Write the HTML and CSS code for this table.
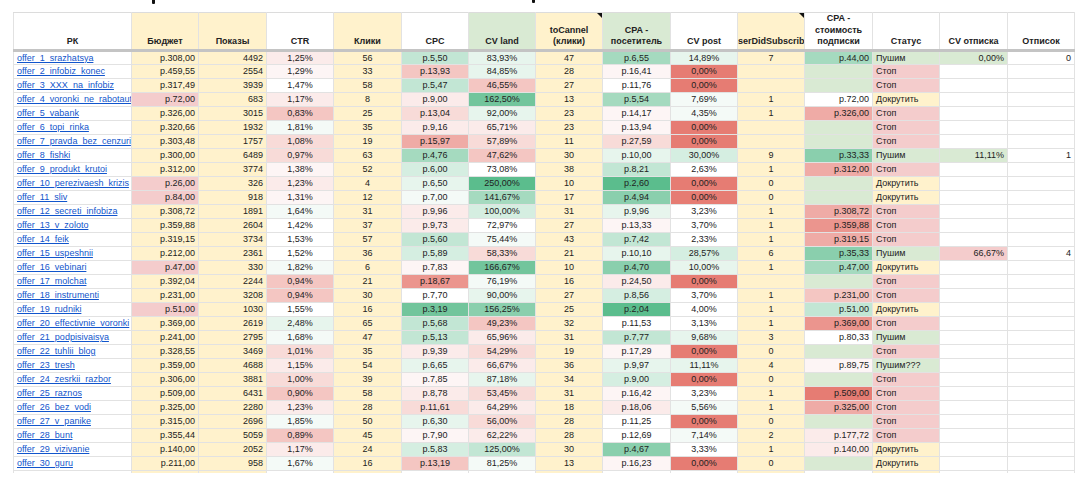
FILE: index.html
```html
<!DOCTYPE html>
<html lang="ru">
<head>
<meta charset="utf-8">
<title>РК</title>
<link rel="stylesheet" href="styles.css">
</head>
<body>
<div class="top"><span class="mark m1"></span><span class="mark m2"></span></div>
<table class="sheet">
<colgroup>
<col class="w-rk"><col class="w67"><col class="w68"><col class="w67"><col class="w68"><col class="w67"><col class="w67"><col class="w67"><col class="w68"><col class="w67"><col class="w67"><col class="w68"><col class="w67"><col class="w68"><col class="w67">
</colgroup>
<thead>
<tr class="head">
<th>РК</th>
<th class="yh">Бюджет</th>
<th class="yh">Показы</th>
<th>CTR</th>
<th class="yh">Клики</th>
<th>CPC</th>
<th class="gh">CV land</th>
<th class="yh note">toCannel<br>(клики)</th>
<th class="gh">CPA -<br>посетитель</th>
<th>CV post</th>
<th class="yh note"><div class="hc"><span>userDidSubscribe</span></div></th>
<th>CPA -<br>стоимость<br>подписки</th>
<th>Статус</th>
<th>CV отписка</th>
<th>Отписок</th>
</tr>
</thead>
<tbody>
<tr><td class="rk"><a href="#">offer_1_srazhatsya</a></td><td class="y ra">р.308,00</td><td class="y ra">4492</td><td class="ca r0">1,25%</td><td class="y ca">56</td><td class="ca g2">р.5,50</td><td class="ca g0">83,93%</td><td class="y ca">47</td><td class="ca g3">р.6,55</td><td class="ca g0">14,89%</td><td class="y ca">7</td><td class="ra g3">р.44,00</td><td class="st push">Пушим</td><td class="ra push">0,00%</td><td class="ra">0</td></tr>
<tr><td class="rk"><a href="#">offer_2_infobiz_konec</a></td><td class="y ra">р.459,55</td><td class="y ra">2554</td><td class="ca rr">1,29%</td><td class="y ca">33</td><td class="ca r2">р.13,93</td><td class="ca g0">84,85%</td><td class="y ca">28</td><td class="ca rr">р.16,41</td><td class="ca r5">0,00%</td><td class="y ca"></td><td class="ra push"></td><td class="st stop">Стоп</td><td></td><td></td></tr>
<tr><td class="rk"><a href="#">offer_3_XXX_na_infobiz</a></td><td class="y ra">р.317,49</td><td class="y ra">3939</td><td class="ca">1,47%</td><td class="y ca">58</td><td class="ca g2">р.5,47</td><td class="ca r2">46,55%</td><td class="y ca">27</td><td class="ca">р.11,76</td><td class="ca r5">0,00%</td><td class="y ca"></td><td class="ra push"></td><td class="st stop">Стоп</td><td></td><td></td></tr>
<tr><td class="rk"><a href="#">offer_4_voronki_ne_rabotaut</a></td><td class="y pk ra">р.72,00</td><td class="y ra">683</td><td class="ca r0">1,17%</td><td class="y ca">8</td><td class="ca r0">р.9,00</td><td class="ca g5">162,50%</td><td class="y ca">13</td><td class="ca g3">р.5,54</td><td class="ca gg">7,69%</td><td class="y ca">1</td><td class="ra">р.72,00</td><td class="st dokr">Докрутить</td><td></td><td></td></tr>
<tr><td class="rk"><a href="#">offer_5_vabank</a></td><td class="y ra">р.326,00</td><td class="y ra">3015</td><td class="ca r2">0,83%</td><td class="y ca">25</td><td class="ca r1">р.13,04</td><td class="ca g0">92,00%</td><td class="y ca">23</td><td class="ca rr">р.14,17</td><td class="ca gg">4,35%</td><td class="y ca">1</td><td class="ra r3">р.326,00</td><td class="st stop">Стоп</td><td></td><td></td></tr>
<tr><td class="rk"><a href="#">offer_6_topi_rinka</a></td><td class="y ra">р.320,66</td><td class="y ra">1932</td><td class="ca gg">1,81%</td><td class="y ca">35</td><td class="ca r0">р.9,16</td><td class="ca r0">65,71%</td><td class="y ca">23</td><td class="ca rr">р.13,94</td><td class="ca r5">0,00%</td><td class="y ca"></td><td class="ra push"></td><td class="st stop">Стоп</td><td></td><td></td></tr>
<tr><td class="rk"><a href="#">offer_7_pravda_bez_cenzuri</a></td><td class="y ra">р.303,48</td><td class="y ra">1757</td><td class="ca r1">1,08%</td><td class="y ca">19</td><td class="ca r3">р.15,97</td><td class="ca r1">57,89%</td><td class="y ca">11</td><td class="ca r1">р.27,59</td><td class="ca r5">0,00%</td><td class="y ca"></td><td class="ra push"></td><td class="st stop">Стоп</td><td></td><td></td></tr>
<tr><td class="rk"><a href="#">offer_8_fishki</a></td><td class="y ra">р.300,00</td><td class="y ra">6489</td><td class="ca r1">0,97%</td><td class="y ca">63</td><td class="ca g3">р.4,76</td><td class="ca r2">47,62%</td><td class="y ca">30</td><td class="ca g0">р.10,00</td><td class="ca g1">30,00%</td><td class="y ca">9</td><td class="ra g4">р.33,33</td><td class="st push">Пушим</td><td class="ra push">11,11%</td><td class="ra">1</td></tr>
<tr><td class="rk"><a href="#">offer_9_produkt_krutoi</a></td><td class="y ra">р.312,00</td><td class="y ra">3774</td><td class="ca rr">1,38%</td><td class="y ca">52</td><td class="ca g1">р.6,00</td><td class="ca">73,08%</td><td class="y ca">38</td><td class="ca g2">р.8,21</td><td class="ca">2,63%</td><td class="y ca">1</td><td class="ra r3">р.312,00</td><td class="st stop">Стоп</td><td></td><td></td></tr>
<tr><td class="rk"><a href="#">offer_10_perezivaesh_krizis</a></td><td class="y pk ra">р.26,00</td><td class="y ra">326</td><td class="ca r0">1,23%</td><td class="y ca">4</td><td class="ca g0">р.6,50</td><td class="ca g6">250,00%</td><td class="y ca">10</td><td class="ca g6">р.2,60</td><td class="ca r5">0,00%</td><td class="y ca">0</td><td class="ra push"></td><td class="st dokr">Докрутить</td><td></td><td></td></tr>
<tr><td class="rk"><a href="#">offer_11_sliv</a></td><td class="y pk ra">р.84,00</td><td class="y ra">918</td><td class="ca rr">1,31%</td><td class="y ca">12</td><td class="ca gg">р.7,00</td><td class="ca g3">141,67%</td><td class="y ca">17</td><td class="ca g4">р.4,94</td><td class="ca r5">0,00%</td><td class="y ca">0</td><td class="ra push"></td><td class="st dokr">Докрутить</td><td></td><td></td></tr>
<tr><td class="rk"><a href="#">offer_12_secreti_infobiza</a></td><td class="y ra">р.308,72</td><td class="y ra">1891</td><td class="ca gg">1,64%</td><td class="y ca">31</td><td class="ca r0">р.9,96</td><td class="ca g1">100,00%</td><td class="y ca">31</td><td class="ca g0">р.9,96</td><td class="ca">3,23%</td><td class="y ca">1</td><td class="ra r3">р.308,72</td><td class="st stop">Стоп</td><td></td><td></td></tr>
<tr><td class="rk"><a href="#">offer_13_v_zoloto</a></td><td class="y ra">р.359,88</td><td class="y ra">2604</td><td class="ca">1,42%</td><td class="y ca">37</td><td class="ca r0">р.9,73</td><td class="ca">72,97%</td><td class="y ca">27</td><td class="ca rr">р.13,33</td><td class="ca">3,70%</td><td class="y ca">1</td><td class="ra r4">р.359,88</td><td class="st stop">Стоп</td><td></td><td></td></tr>
<tr><td class="rk"><a href="#">offer_14_feik</a></td><td class="y ra">р.319,15</td><td class="y ra">3734</td><td class="ca">1,53%</td><td class="y ca">57</td><td class="ca g2">р.5,60</td><td class="ca gg">75,44%</td><td class="y ca">43</td><td class="ca g2">р.7,42</td><td class="ca">2,33%</td><td class="y ca">1</td><td class="ra r3">р.319,15</td><td class="st stop">Стоп</td><td></td><td></td></tr>
<tr><td class="rk"><a href="#">offer_15_uspeshnii</a></td><td class="y ra">р.212,00</td><td class="y ra">2361</td><td class="ca">1,52%</td><td class="y ca">36</td><td class="ca g1">р.5,89</td><td class="ca r1">58,33%</td><td class="y ca">21</td><td class="ca g0">р.10,10</td><td class="ca g1">28,57%</td><td class="y ca">6</td><td class="ra g4">р.35,33</td><td class="st push">Пушим</td><td class="ra stop">66,67%</td><td class="ra">4</td></tr>
<tr><td class="rk"><a href="#">offer_16_vebinari</a></td><td class="y pk ra">р.47,00</td><td class="y ra">330</td><td class="ca gg">1,82%</td><td class="y ca">6</td><td class="ca rr">р.7,83</td><td class="ca g5">166,67%</td><td class="y ca">10</td><td class="ca g4">р.4,70</td><td class="ca g0">10,00%</td><td class="y ca">1</td><td class="ra g3">р.47,00</td><td class="st dokr">Докрутить</td><td></td><td></td></tr>
<tr><td class="rk"><a href="#">offer_17_molchat</a></td><td class="y ra">р.392,04</td><td class="y ra">2244</td><td class="ca r2">0,94%</td><td class="y ca">21</td><td class="ca r4">р.18,67</td><td class="ca gg">76,19%</td><td class="y ca">16</td><td class="ca r0">р.24,50</td><td class="ca r5">0,00%</td><td class="y ca"></td><td class="ra push"></td><td class="st stop">Стоп</td><td></td><td></td></tr>
<tr><td class="rk"><a href="#">offer_18_instrumenti</a></td><td class="y ra">р.231,00</td><td class="y ra">3208</td><td class="ca r2">0,94%</td><td class="y ca">30</td><td class="ca">р.7,70</td><td class="ca g0">90,00%</td><td class="y ca">27</td><td class="ca g1">р.8,56</td><td class="ca">3,70%</td><td class="y ca">1</td><td class="ra r2">р.231,00</td><td class="st stop">Стоп</td><td></td><td></td></tr>
<tr><td class="rk"><a href="#">offer_19_rudniki</a></td><td class="y pk ra">р.51,00</td><td class="y ra">1030</td><td class="ca">1,55%</td><td class="y ca">16</td><td class="ca g5">р.3,19</td><td class="ca g4">156,25%</td><td class="y ca">25</td><td class="ca g6">р.2,04</td><td class="ca">4,00%</td><td class="y ca">1</td><td class="ra g2">р.51,00</td><td class="st dokr">Докрутить</td><td></td><td></td></tr>
<tr><td class="rk"><a href="#">offer_20_effectivnie_voronki</a></td><td class="y ra">р.369,00</td><td class="y ra">2619</td><td class="ca g0">2,48%</td><td class="y ca">65</td><td class="ca g2">р.5,68</td><td class="ca r2">49,23%</td><td class="y ca">32</td><td class="ca">р.11,53</td><td class="ca">3,13%</td><td class="y ca">1</td><td class="ra r4">р.369,00</td><td class="st stop">Стоп</td><td></td><td></td></tr>
<tr><td class="rk"><a href="#">offer_21_podpisivaisya</a></td><td class="y ra">р.241,00</td><td class="y ra">2795</td><td class="ca gg">1,68%</td><td class="y ca">47</td><td class="ca g2">р.5,13</td><td class="ca r0">65,96%</td><td class="y ca">31</td><td class="ca g2">р.7,77</td><td class="ca g0">9,68%</td><td class="y ca">3</td><td class="ra">р.80,33</td><td class="st push">Пушим</td><td></td><td></td></tr>
<tr><td class="rk"><a href="#">offer_22_tuhlii_blog</a></td><td class="y ra">р.328,55</td><td class="y ra">3469</td><td class="ca r1">1,01%</td><td class="y ca">35</td><td class="ca r0">р.9,39</td><td class="ca r1">54,29%</td><td class="y ca">19</td><td class="ca rr">р.17,29</td><td class="ca r5">0,00%</td><td class="y ca">0</td><td class="ra push"></td><td class="st stop">Стоп</td><td></td><td></td></tr>
<tr><td class="rk"><a href="#">offer_23_tresh</a></td><td class="y ra">р.359,00</td><td class="y ra">4688</td><td class="ca r0">1,15%</td><td class="y ca">54</td><td class="ca g0">р.6,65</td><td class="ca r0">66,67%</td><td class="y ca">36</td><td class="ca g0">р.9,97</td><td class="ca g0">11,11%</td><td class="y ca">4</td><td class="ra rr">р.89,75</td><td class="st push">Пушим???</td><td></td><td></td></tr>
<tr><td class="rk"><a href="#">offer_24_zesrkii_razbor</a></td><td class="y ra">р.306,00</td><td class="y ra">3881</td><td class="ca r1">1,00%</td><td class="y ca">39</td><td class="ca rr">р.7,85</td><td class="ca g0">87,18%</td><td class="y ca">34</td><td class="ca g1">р.9,00</td><td class="ca r5">0,00%</td><td class="y ca">0</td><td class="ra push"></td><td class="st stop">Стоп</td><td></td><td></td></tr>
<tr><td class="rk"><a href="#">offer_25_raznos</a></td><td class="y ra">р.509,00</td><td class="y ra">6431</td><td class="ca r2">0,90%</td><td class="y ca">58</td><td class="ca r0">р.8,78</td><td class="ca r1">53,45%</td><td class="y ca">31</td><td class="ca rr">р.16,42</td><td class="ca">3,23%</td><td class="y ca">1</td><td class="ra r5">р.509,00</td><td class="st stop">Стоп</td><td></td><td></td></tr>
<tr><td class="rk"><a href="#">offer_26_bez_vodi</a></td><td class="y ra">р.325,00</td><td class="y ra">2280</td><td class="ca r0">1,23%</td><td class="y ca">28</td><td class="ca r1">р.11,61</td><td class="ca r0">64,29%</td><td class="y ca">18</td><td class="ca r0">р.18,06</td><td class="ca gg">5,56%</td><td class="y ca">1</td><td class="ra r3">р.325,00</td><td class="st stop">Стоп</td><td></td><td></td></tr>
<tr><td class="rk"><a href="#">offer_27_v_panike</a></td><td class="y ra">р.315,00</td><td class="y ra">2696</td><td class="ca gg">1,85%</td><td class="y ca">50</td><td class="ca g0">р.6,30</td><td class="ca r1">56,00%</td><td class="y ca">28</td><td class="ca">р.11,25</td><td class="ca r5">0,00%</td><td class="y ca">0</td><td class="ra push"></td><td class="st stop">Стоп</td><td></td><td></td></tr>
<tr><td class="rk"><a href="#">offer_28_bunt</a></td><td class="y ra">р.355,44</td><td class="y ra">5059</td><td class="ca r2">0,89%</td><td class="y ca">45</td><td class="ca rr">р.7,90</td><td class="ca r0">62,22%</td><td class="y ca">28</td><td class="ca">р.12,69</td><td class="ca gg">7,14%</td><td class="y ca">2</td><td class="ra r0">р.177,72</td><td class="st stop">Стоп</td><td></td><td></td></tr>
<tr><td class="rk"><a href="#">offer_29_vizivanie</a></td><td class="y ra">р.140,00</td><td class="y ra">2052</td><td class="ca r0">1,17%</td><td class="y ca">24</td><td class="ca g1">р.5,83</td><td class="ca g2">125,00%</td><td class="y ca">30</td><td class="ca g4">р.4,67</td><td class="ca">3,33%</td><td class="y ca">1</td><td class="ra r0">р.140,00</td><td class="st dokr">Докрутить</td><td></td><td></td></tr>
<tr><td class="rk"><a href="#">offer_30_guru</a></td><td class="y ra">р.211,00</td><td class="y ra">958</td><td class="ca gg">1,67%</td><td class="y ca">16</td><td class="ca r2">р.13,19</td><td class="ca gg">81,25%</td><td class="y ca">13</td><td class="ca rr">р.16,23</td><td class="ca r5">0,00%</td><td class="y ca">0</td><td class="ra push"></td><td class="st dokr">Докрутить</td><td></td><td></td></tr>
<tr class="tail"><td></td><td class="y"></td><td class="y"></td><td></td><td class="y"></td><td></td><td></td><td class="y"></td><td></td><td></td><td class="y"></td><td></td><td class="dokr"></td><td></td><td></td></tr>
</tbody>
</table>
</body>
</html>
```

FILE: styles.css
```css
body {
  margin: 0;
  background: #fff;
  font-family: "Liberation Sans", Arial, sans-serif;
  font-size: 9px;
  color: #222;
}

.top {
  height: 12px;
  display: flex;
  align-items: flex-start;
}
.mark {
  display: block;
  width: 3px;
  height: 4px;
  background: #111;
  border-radius: 0 0 1px 1px;
}
.m1 { margin-left: 152px; }
.m2 { margin-left: 377px; height: 3px; }

.sheet {
  border-collapse: collapse;
  table-layout: fixed;
  width: 1061px;
  margin-left: 13px;
}
.w-rk { width: 118px; }
.w67 { width: 67px; }
.w68 { width: 68px; }

.sheet td,
.sheet th {
  border: 1px solid #e2e2e2;
  padding: 0 3px;
  overflow: hidden;
  white-space: nowrap;
}
.sheet tbody tr { height: 14px; }
.sheet td { line-height: 12px; }

.head { height: 36px; }
.sheet th {
  position: relative;
  font-weight: bold;
  text-align: center;
  vertical-align: bottom;
  line-height: 11.5px;
  padding-bottom: 1px;
  background: #fff;
  border-bottom: 3px solid #c4c4c4;
  border-top-color: #dcdcdc;
}
.sheet th.yh { background: #fff2cc; }
.sheet th.gh { background: #d9ead3; }
.note::after {
  content: "";
  position: absolute;
  top: 0;
  right: 0;
  border-top: 5px solid #111;
  border-left: 5px solid transparent;
}
.hc {
  display: flex;
  justify-content: center;
  overflow: hidden;
  margin: 0 -3px;
}
.hc span { flex-shrink: 0; }

.rk a {
  color: #1155cc;
  text-decoration: underline;
}
.ra { text-align: right; }
.ca { text-align: center; }
.st { padding-left: 2px; }

.y { background: #fff2cc; }
.pk { background: #f4cccc; }
.push { background: #d9ead3; }
.stop { background: #f4cccc; }
.dokr { background: #fff2cc; }

.r5 { background: #e67c73; }
.r4 { background: #eb958e; }
.r3 { background: #efaba6; }
.r2 { background: #f4c6c2; }
.r1 { background: #f8dbd8; }
.r0 { background: #fbebea; }
.rr { background: #fdf5f5; }
.gg { background: #f4faf7; }
.g0 { background: #e7f5ed; }
.g1 { background: #d5eee1; }
.g2 { background: #c2e6d4; }
.g3 { background: #a5dabf; }
.g4 { background: #8acfad; }
.g5 { background: #72c59c; }
.g6 { background: #5bbd8d; }

.sheet tr.tail { height: 3px; }
.tail td { border-bottom: 0; line-height: 0; }
```
